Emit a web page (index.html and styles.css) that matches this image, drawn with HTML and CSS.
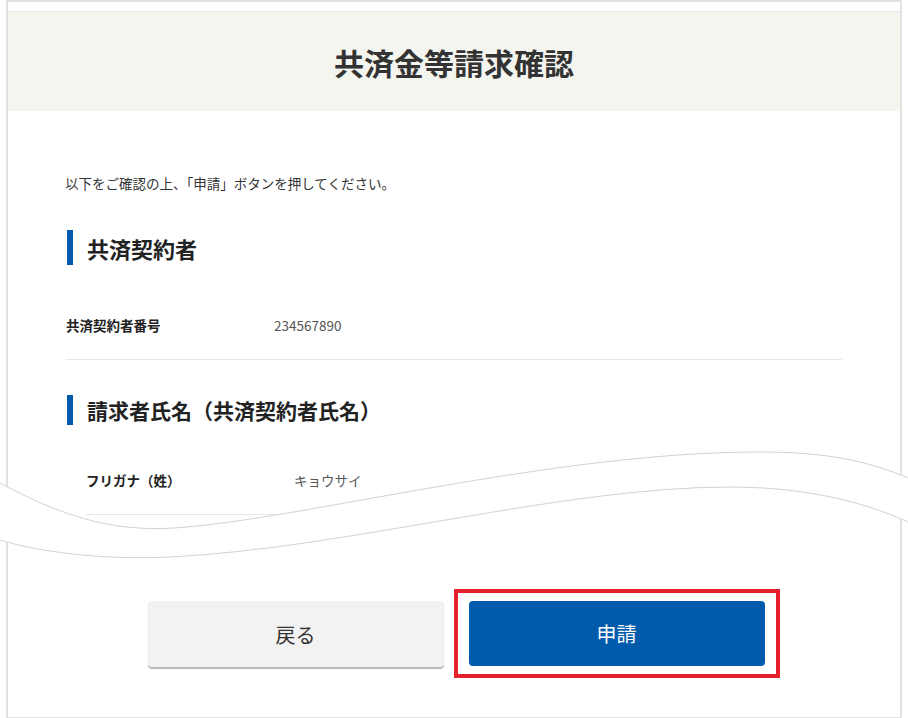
FILE: index.html
```html
<!DOCTYPE html>
<html lang="ja">
<head>
  <meta charset="UTF-8">
  <meta name="viewport" content="width=device-width, initial-scale=1.0">
  <title>共済金等請求確認</title>
  <link rel="stylesheet" href="styles.css">
</head>
<body>
  <div class="page">
    <div class="frame">
      <div class="header">
        <h1>共済金等請求確認</h1>
      </div>

      <div class="content">
        <p class="intro">以下をご確認の上、「申請」ボタンを押してください。</p>

        <!-- 共済契約者 -->
        <h2 class="section-title">共済契約者</h2>
        <div class="row">
          <div class="row-label">共済契約者番号</div>
          <div class="row-value">234567890</div>
        </div>

        <!-- 請求者氏名 -->
        <h2 class="section-title small">請求者氏名（共済契約者氏名）</h2>
        <div class="row indent">
          <div class="row-label">フリガナ（姓）</div>
          <div class="row-value">キョウサイ</div>
        </div>

        <!-- ボタン -->
        <div class="actions">
          <button class="btn btn-back">戻る</button>
          <span class="highlight">
            <button class="btn btn-submit">申請</button>
          </span>
        </div>
      </div>
    </div>

    <!-- 省略を示す波線 -->
    <svg class="wave" viewBox="0 0 908 718" width="908" height="718">
      <defs>
        <clipPath id="inner">
          <rect x="8" y="0" width="892" height="718"/>
        </clipPath>
      </defs>
      <path class="wave-fill" d="M0,483 C60,515 110,532 174,528 C300,520 550,452 760,452 C830,452 870,462 908,478 L908,522 C860,500 800,487 730,487 C560,487 350,548 170,557 C100,560 40,552 0,540 Z"/>
      <path class="wave-fill" clip-path="url(#inner)" d="M0,540 C40,552 100,560 170,557 C350,548 560,487 730,487 C800,487 860,500 908,522 L908,584 L0,584 Z"/>
      <path class="wave-line" d="M0,483 C60,515 110,532 174,528 C300,520 550,452 760,452 C830,452 870,462 908,478"/>
      <path class="wave-line" d="M0,540 C40,552 100,560 170,557 C350,548 560,487 730,487 C800,487 860,500 908,522"/>
    </svg>
  </div>
</body>
</html>
```

FILE: styles.css
```css
* {
  box-sizing: border-box;
}
body {
  margin: 0;
  padding: 0;
  background: #fff;
  font-family: "Noto Sans CJK JP", "Noto Sans", sans-serif;
  color: #333;
}
.page {
  position: relative;
  width: 908px;
  height: 718px;
  overflow: hidden;
}
.frame {
  margin-left: 6px;
  width: 896px;
  border: 2px solid #e2e2e2;
  padding-bottom: 50px;
}
.header {
  margin-top: 9px;
  height: 100px;
  background: #f5f5f0;
  border-top: 1px solid #e6e6e6;
  display: flex;
  align-items: center;
  justify-content: center;
}
h1 {
  margin: 0;
  font-size: 30px;
  font-weight: 700;
  color: #333;
}
.content {
  padding: 0 58px;
}
.intro {
  margin: 62px 0 0 -1px;
  font-size: 13.5px;
  line-height: 20px;
  color: #333;
}
.section-title {
  margin: 37px 0 0 1px;
  height: 35px;
  border-left: 6px solid #005bac;
  padding-left: 14px;
  display: flex;
  align-items: center;
  font-size: 22px;
  font-weight: 700;
  color: #222;
}
.section-title.small {
  margin-top: 35px;
  height: 30px;
  font-size: 21px;
}
.row {
  display: flex;
  margin-top: 25px;
  padding: 25px 0 24px;
  border-bottom: 1px solid #e8e8e8;
  font-size: 13.5px;
  line-height: 20px;
}
.row.indent {
  margin-top: 20px;
  margin-left: 20px;
}
.row-label {
  width: 208px;
  font-weight: 700;
  color: #222;
}
.row-value {
  color: #555;
}
.actions {
  display: flex;
  justify-content: center;
  gap: 25px;
  margin-top: 86px;
  padding-left: 4px;
}
.btn {
  width: 296px;
  height: 66px;
  border: none;
  border-radius: 4px;
  font-family: inherit;
  font-size: 20px;
  cursor: pointer;
}
.btn-back {
  background: #f2f2f2;
  color: #333;
  box-shadow: 0 2px 1px #b8b8b8;
}
.btn-submit {
  display: block;
  height: 65px;
  background: #005bac;
  color: #fff;
}
.highlight {
  position: relative;
  display: block;
}
.highlight::after {
  content: "";
  position: absolute;
  top: -12px;
  left: -15px;
  right: -15px;
  bottom: -11px;
  border: 4px solid #e3202c;
  pointer-events: none;
}
.wave {
  position: absolute;
  top: 0;
  left: 0;
  pointer-events: none;
}
.wave-fill {
  fill: #fff;
}
.wave-line {
  fill: none;
  stroke: #d2d2d2;
  stroke-width: 1;
}
```
